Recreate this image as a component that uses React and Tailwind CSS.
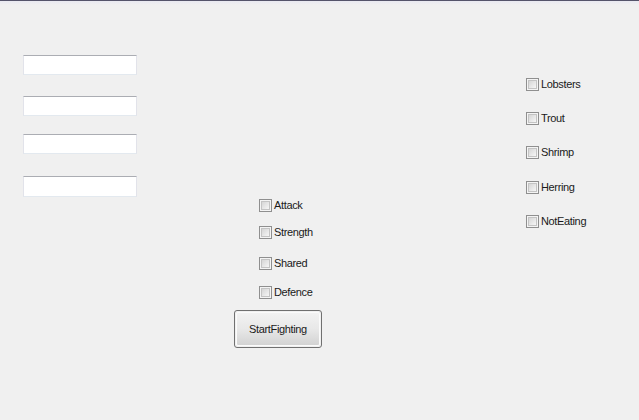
const font = { fontFamily: '"Liberation Sans", Arial, sans-serif' };

function TextBox({ className = "" }) {
  return (
    <div
      className={`w-[114px] bg-white border border-t-[#abadb3] border-x-[#e2e3ea] border-b-[#e3e9ef] ${className}`}
    />
  );
}

function Check({ label, className = "" }) {
  return (
    <div className={`flex items-center h-[13px] ${className}`}>
      <span className="w-[13px] h-[13px] shrink-0 border border-[#8f8f8f] bg-[#f4f4f4] p-px">
        <span className="block w-full h-full border border-[#c4c4c4] bg-gradient-to-br from-[#d6d6d6] to-[#f6f6f6]" />
      </span>
      <span className="ml-[2px] text-[11px] leading-none tracking-[-0.35px] text-[#1a1a1a] whitespace-nowrap">
        {label}
      </span>
    </div>
  );
}

export default function App() {
  return (
    <div className="w-[639px] h-[420px] bg-[#f0f0f0] overflow-hidden" style={font}>
      {/* window edge */}
      <div className="h-px bg-[#55546a]" />
      <div className="h-[4px] bg-gradient-to-b from-[#e9e9f1] to-[#f0f0f0]" />

      <div className="flex items-start pl-[23px]">
        {/* text inputs */}
        <div className="flex flex-col pt-[50px]">
          <TextBox className="h-[20px]" />
          <TextBox className="h-[20px] mt-[21px]" />
          <TextBox className="h-[20px] mt-[18px]" />
          <TextBox className="h-[21px] mt-[22px]" />
        </div>

        {/* skills + start */}
        <div className="flex flex-col w-[88px] ml-[97px] pt-[194px]">
          <Check label="Attack" className="ml-[25px]" />
          <Check label="Strength" className="ml-[25px] mt-[14px]" />
          <Check label="Shared" className="ml-[25px] mt-[18px]" />
          <Check label="Defence" className="ml-[25px] mt-[16px]" />
          <button className="mt-[11px] h-[38px] w-[88px] rounded-[3px] border border-[#707070] p-px">
            <span className="flex items-center justify-center h-full rounded-[2px] border border-[#fbfbfb] bg-gradient-to-b from-[#f2f2f2] via-[#e8e8e8] to-[#d3d3d3] text-[11px] tracking-[-0.35px] text-[#1a1a1a]">
              StartFighting
            </span>
          </button>
        </div>

        {/* food */}
        <div className="flex flex-col ml-[204px] pt-[73px]">
          <Check label="Lobsters" />
          <Check label="Trout" className="mt-[21px]" />
          <Check label="Shrimp" className="mt-[21px]" />
          <Check label="Herring" className="mt-[22px]" />
          <Check label="NotEating" className="mt-[21px]" />
        </div>
      </div>
    </div>
  );
}
